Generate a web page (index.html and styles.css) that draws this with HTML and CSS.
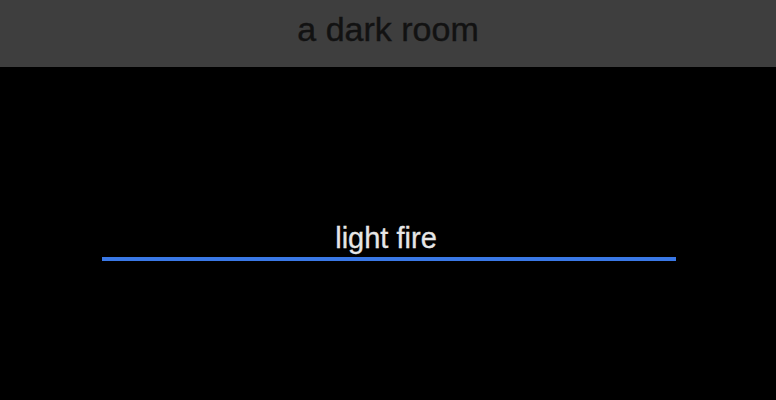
FILE: index.html
```html
<!DOCTYPE html>
<html>
<head>
<meta charset="utf-8">
<link rel="stylesheet" href="styles.css">
</head>
<body>
<header class="topbar">a dark room</header>
<main class="stage">
  <div class="action">light fire</div>
</main>
</body>
</html>
```
FILE: styles.css
```css
html, body {
  margin: 0;
  padding: 0;
  background: #000;
  height: 100%;
  overflow: hidden;
}
body {
  font-family: "Liberation Sans", Arial, sans-serif;
}
.topbar {
  height: 67px;
  line-height: 59px;
  background: #3e3e3e;
  color: #121212;
  font-size: 34px;
  text-align: center;
  -webkit-text-stroke: 0.4px #121212;
}
.stage {
  padding-top: 156px;
}
.action {
  width: 568px;
  margin-left: 102px;
  padding-right: 6px;
  font-size: 29px;
  line-height: 30px;
  color: #e6e6e6;
  text-align: center;
  padding-bottom: 4px;
  border-bottom: 4px solid #3a78e6;
  -webkit-text-stroke: 0.3px #e6e6e6;
}
```
